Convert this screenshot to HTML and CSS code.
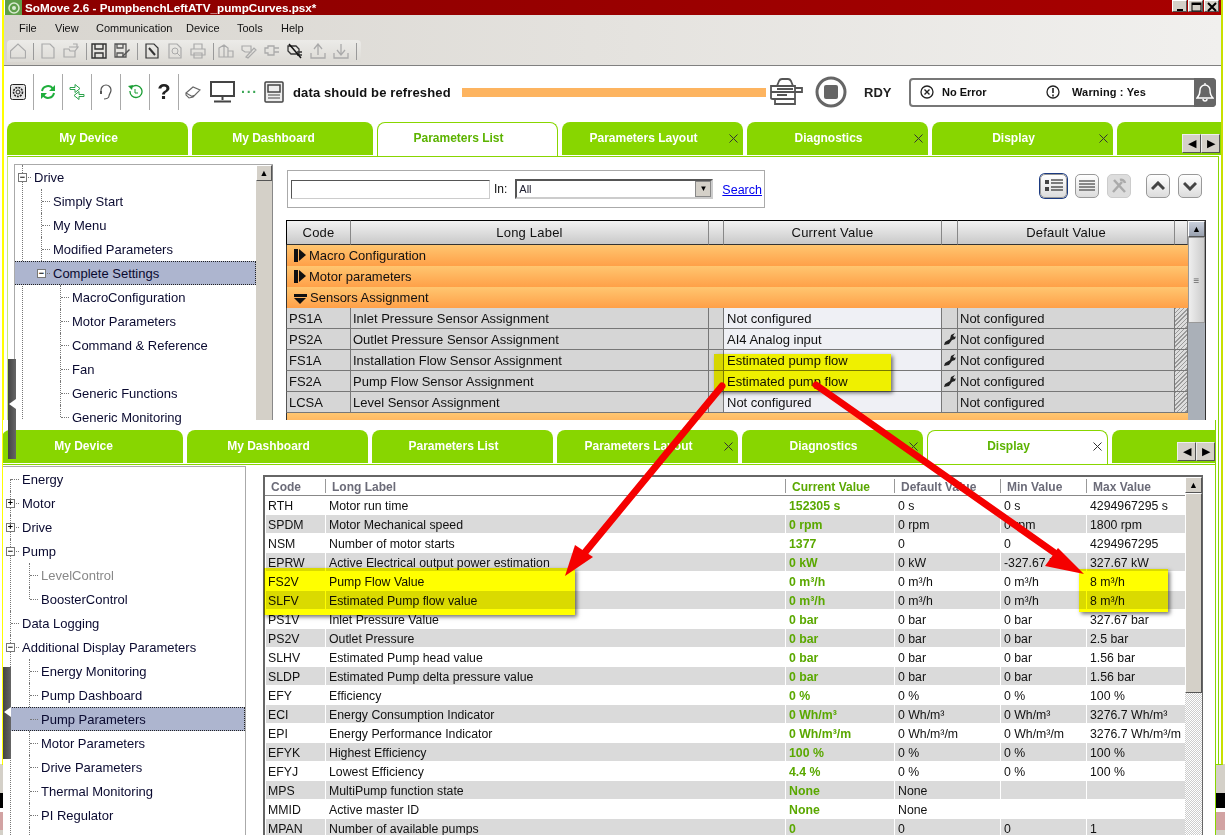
FILE: index.html
```html
<!DOCTYPE html>
<html lang="en">
<head>
    <meta charset="UTF-8">
    <title>SoMove 2.6 - PumpbenchLeftATV_pumpCurves.psx*</title>
    <link rel="stylesheet" href="styles.css">
</head>
<body>
<div class="desktop">

    <!-- back window: parameters list -->
    <div class="window back">
        <div class="titlebar">
            <svg class="app-icon" width="17" height="15" viewBox="0 0 17 15"><rect width="17" height="15" fill="#5f9e4a"/><circle cx="9" cy="8" r="5" fill="none" stroke="#d8ead0" stroke-width="1.5"/><circle cx="9" cy="8" r="2" fill="#d8ead0"/></svg>
            <span class="title-text">SoMove 2.6 - PumpbenchLeftATV_pumpCurves.psx*</span>
            <div class="win-buttons">
                <button class="win-btn"><svg width="15" height="12"><rect x="4" y="8" width="6" height="2" fill="#000"/></svg></button>
                <button class="win-btn"><svg width="15" height="12"><rect x="3" y="2" width="9" height="8" fill="none" stroke="#000"/><rect x="3" y="2" width="9" height="2" fill="#000"/></svg></button>
                <button class="win-btn"><svg width="15" height="12"><path d="M3 2l8 8M11 2l-8 8" stroke="#000" stroke-width="2"/></svg></button>
            </div>
        </div>
        <div class="menu-area">
            <nav class="menubar">
                <span>File</span><span>View</span><span>Communication</span><span>Device</span><span>Tools</span><span>Help</span>
            </nav>
            <div class="toolbar">
                <svg class="tool" viewBox="0 0 16 16"><path d="M0.5 8L8 1l7.5 7v7H0.5z" fill="none" stroke="#aaa" stroke-width="1.2"/></svg>
                <i class="sep"></i>
                <svg class="tool" viewBox="0 0 16 16"><path d="M2 1h8l4 4v10H2z" fill="none" stroke="#aaa" stroke-width="1.2"/></svg>
                <svg class="tool" viewBox="0 0 16 16"><path d="M1 14V6h5l1 2h5v6zM12 8l3-4H6M10 1h4v3" fill="none" stroke="#aaa" stroke-width="1.2"/></svg>
                <i class="sep tight"></i>
                <svg class="tool" viewBox="0 0 16 16"><path d="M1 1h14v14H1zM4 1v5h8V1M4 15v-5h8v5" fill="none" stroke="#333" stroke-width="1.4"/></svg>
                <svg class="tool" viewBox="0 0 16 16"><path d="M1 1h11v13H1zM3 1v4h6V1M3 14v-4h6v4" fill="none" stroke="#555" stroke-width="1.3"/><path d="M8 13l7-7 1 1-7 7z" fill="#555"/></svg>
                <i class="sep"></i>
                <svg class="tool" viewBox="0 0 16 16"><path d="M2 1h8l4 4v10H2z" fill="none" stroke="#333" stroke-width="1.2"/><path d="M5 5l6 7" stroke="#333" stroke-width="2"/></svg>
                <svg class="tool" viewBox="0 0 16 16"><path d="M2 1h8l4 4v10H2z" fill="none" stroke="#aaa" stroke-width="1.2"/><circle cx="8" cy="8" r="3" fill="none" stroke="#aaa"/><path d="M10 10l3 3" stroke="#aaa"/></svg>
                <svg class="tool" viewBox="0 0 16 16"><path d="M4 6V1h8v5M1 6h14v6H1zM4 10h8v5H4z" fill="none" stroke="#aaa" stroke-width="1.2"/></svg>
                <i class="sep tight"></i>
                <svg class="tool" viewBox="0 0 16 16"><path d="M1 5l5-3 4 3v9H1zM6 2v12M10 8h5v6h-5z" fill="none" stroke="#aaa" stroke-width="1.2"/></svg>
                <svg class="tool" viewBox="0 0 16 16"><path d="M1 3h9v6H4L1 7zM5 14l8-9 2 2-8 8z" fill="none" stroke="#aaa" stroke-width="1.2"/></svg>
                <svg class="tool" viewBox="0 0 16 16"><path d="M1 5h3V3h6v9H4v-2H1zM10 5h5M10 9h5" fill="none" stroke="#aaa" stroke-width="1.3"/></svg>
                <svg class="tool" viewBox="0 0 16 16"><path d="M1 3h8l3 3v5H4L1 8zM10 9h5M10 12h5" fill="none" stroke="#333" stroke-width="1.3"/><path d="M2 1l12 14" stroke="#111" stroke-width="1.5"/></svg>
                <svg class="tool" viewBox="0 0 16 16"><path d="M1 10v5h14v-5M8 12V2M4 6l4-5 4 5" fill="none" stroke="#aaa" stroke-width="1.3"/></svg>
                <svg class="tool" viewBox="0 0 16 16"><path d="M1 10v5h14v-5M8 1v10M4 7l4 5 4-5" fill="none" stroke="#aaa" stroke-width="1.3"/></svg>
                <i class="sep"></i>
            </div>
        </div>

        <div class="actionbar">
            <svg class="act act-first" viewBox="0 0 16 16"><rect x="0.5" y="0.5" width="15" height="15" rx="2" fill="#e6e6e6" stroke="#222"/><circle cx="8" cy="8" r="4.5" fill="none" stroke="#222" stroke-width="1.6" stroke-dasharray="2 1"/><circle cx="8" cy="8" r="2" fill="none" stroke="#222"/></svg>
            <i class="act-sep"></i>
            <svg class="act" viewBox="0 0 16 16"><path d="M2 7a6 6 0 0 1 11-2M14 9a6 6 0 0 1-11 2" fill="none" stroke="#1fae3c" stroke-width="2"/><path d="M15 1v6H9zM1 15V9h6z" fill="#1fae3c"/></svg>
            <i class="act-sep"></i>
            <svg class="act" viewBox="0 0 16 16"><path d="M1 3.500h5V0.500l5 4-5 4V5.500H1z" fill="#fff" stroke="#2aa24a"/><path d="M15 10.500h-5v-3l-5 4 5 4v-3h5z" fill="#fff" stroke="#2aa24a"/></svg>
            <i class="act-sep"></i>
            <svg class="act" viewBox="0 0 16 16"><path d="M3 9V6a5 5 0 0 1 10 0c0 3-2 4-2 6 0 2-3 3-5 3" fill="none" stroke="#555" stroke-width="1.2"/><rect x="2" y="7" width="2" height="3" fill="#555"/></svg>
            <i class="act-sep"></i>
            <svg class="act" viewBox="0 0 16 16"><path d="M5 3a6 6 0 1 1-2 4" fill="none" stroke="#1b9e35" stroke-width="1.3"/><path d="M1 2l5-1-1 5z" fill="#1b9e35"/><path d="M8 5v4h3" fill="none" stroke="#1b9e35"/></svg>
            <i class="act-sep"></i>
            <span class="act help">?</span>
            <i class="act-sep"></i>
            <svg class="act" viewBox="0 0 16 16"><path d="M1 9l7-6 7 3-7 7zM1 9v2l3 3 4-1v-2" fill="none" stroke="#666" stroke-width="1.1"/></svg>
            <svg class="monitor" width="25" height="22" viewBox="0 0 25 22"><path d="M1 1h23v14H1zM12.500 15v4M4 20.500h17" fill="none" stroke="#444" stroke-width="2"/></svg>
            <span class="dots">···</span>
            <svg class="device" width="20" height="22" viewBox="0 0 20 22"><rect x="1" y="1" width="18" height="20" rx="1" fill="#eee" stroke="#444" stroke-width="1.5"/><rect x="4" y="4" width="12" height="7" fill="none" stroke="#444" stroke-width="1.5"/><path d="M4 14h12M4 17h12" stroke="#444"/></svg>
            <span class="refresh-note">data should be refreshed</span>
            <div class="progress"></div>
            <svg class="motor" width="35" height="28" viewBox="0 0 35 28"><path d="M8 8l2-5q1-2 3-2h6q2 0 3 2l2 5M2 8h24v6H2zM26 10h7v4h-7M2 14v6q0 1 2 1h22v-7M8 11h16M8 17h10M6 21v5h20v-5" fill="none" stroke="#555" stroke-width="1.800"/></svg>
            <svg class="stop" width="32" height="32" viewBox="0 0 32 32"><circle cx="16" cy="16" r="14" fill="#fff" stroke="#666" stroke-width="3"/><rect x="9" y="9" width="14" height="14" rx="2" fill="#666"/></svg>
            <span class="rdy">RDY</span>
            <div class="status">
                <svg class="status-icon" width="14" height="14" viewBox="0 0 14 14"><circle cx="7" cy="7" r="6" fill="none" stroke="#222" stroke-width="1.3"/><path d="M4.500 4.500l5 5M9.500 4.500l-5 5" stroke="#222" stroke-width="1.4"/></svg>
                <span class="status-label no-error">No Error</span>
                <svg class="status-icon" width="14" height="14" viewBox="0 0 14 14"><circle cx="7" cy="7" r="6" fill="none" stroke="#222" stroke-width="1.3"/><path d="M7 3v5M7 9.500v2" stroke="#222" stroke-width="1.6"/></svg>
                <span class="status-label warning">Warning : Yes</span>
                <div class="bell"><svg width="18" height="20" viewBox="0 0 18 20"><path d="M1 16c2-2 3-4 3-8a5 5 0 0 1 10 0c0 4 1 6 3 8zM7 17a2 2 0 0 0 4 0M9 3V1" fill="none" stroke="#fff" stroke-width="1.4"/></svg></div>
            </div>
        </div>

        <div class="tabs">
            <div class="tab">My Device</div>
            <div class="tab">My Dashboard</div>
            <div class="tab active">Parameters List</div>
            <div class="tab">Parameters Layout<svg class="close" width="9" height="9" viewBox="0 0 9 9"><path d="M0.500 0.500l8 8M8.500 0.500l-8 8" stroke="#333"/></svg></div>
            <div class="tab">Diagnostics<svg class="close" width="9" height="9" viewBox="0 0 9 9"><path d="M0.500 0.500l8 8M8.500 0.500l-8 8" stroke="#333"/></svg></div>
            <div class="tab">Display<svg class="close" width="9" height="9" viewBox="0 0 9 9"><path d="M0.500 0.500l8 8M8.500 0.500l-8 8" stroke="#333"/></svg></div>
            <div class="tab"></div>
            <div class="tab-scroll"><button class="tab-arrow">◀</button><button class="tab-arrow">▶</button></div>
        </div>

        <div class="tab-body">
            <div class="handle"><i></i></div>
            <div class="tree-panel">
                <ul class="tree">
                    <li class="cont">
                        <div class="node"><b class="box">−</b>Drive</div>
                        <ul>
                            <li><div class="node">Simply Start</div></li>
                            <li><div class="node">My Menu</div></li>
                            <li><div class="node">Modified Parameters</div></li>
                            <li>
                                <div class="node selected sel-a"><b class="box">−</b>Complete Settings</div>
                                <ul>
                                    <li><div class="node">MacroConfiguration</div></li>
                                    <li><div class="node">Motor Parameters</div></li>
                                    <li><div class="node">Command &amp; Reference</div></li>
                                    <li><div class="node">Fan</div></li>
                                    <li><div class="node">Generic Functions</div></li>
                                    <li><div class="node">Generic Monitoring</div></li>
                                </ul>
                            </li>
                        </ul>
                    </li>
                </ul>
                <div class="tree-scroll"><button class="sb-btn">▲</button><div class="sb-thumb"></div></div>
            </div>

            <div class="params">
                <div class="search-row">
                    <div class="search-box">
                        <input class="search-input" type="text">
                        <span>In:</span>
                        <div class="select"><span>All</span><b>▼</b></div>
                        <a class="search-link">Search</a>
                    </div>
                    <div class="view-buttons">
                        <button class="view-btn on"><svg width="18" height="14" viewBox="0 0 18 14"><path d="M0 1h4v4H0zM0 8h4v4H0z" fill="#444"/><path d="M6 1h12M6 4h12M6 8h12M6 11h12" stroke="#555" stroke-width="1.300"/></svg></button>
                        <button class="view-btn"><svg width="16" height="12" viewBox="0 0 16 12"><path d="M0 1h16M0 4h16M0 7h16M0 10h16" stroke="#666" stroke-width="1.300"/></svg></button>
                        <button class="view-btn off"><svg width="18" height="18" viewBox="0 0 18 18"><path d="M3 15L12 5M4 3l11 12M10 3a4 4 0 0 1 5 3" fill="none" stroke="#aaa" stroke-width="2.500"/></svg></button>
                        <button class="view-btn gap"><svg width="14" height="10" viewBox="0 0 14 10"><path d="M1 8l6-6 6 6" fill="none" stroke="#444" stroke-width="3"/></svg></button>
                        <button class="view-btn"><svg width="14" height="10" viewBox="0 0 14 10"><path d="M1 2l6 6 6-6" fill="none" stroke="#444" stroke-width="3"/></svg></button>
                    </div>
                </div>
                <div class="table-wrap">
                    <table class="list">
                        <colgroup>
                            <col class="c-code"><col class="c-label"><col class="c-gap1"><col class="c-cur"><col class="c-gap2"><col class="c-def"><col class="c-hatch">
                        </colgroup>
                        <thead>
                            <tr><th>Code</th><th>Long Label</th><th></th><th>Current Value</th><th></th><th>Default Value</th><th></th></tr>
                        </thead>
                        <tbody>
                            <tr class="group"><td colspan="7"><i class="tri-right"></i>Macro Configuration</td></tr>
                            <tr class="group"><td colspan="7"><i class="tri-right"></i>Motor parameters</td></tr>
                            <tr class="group"><td colspan="7"><i class="tri-down"></i>Sensors Assignment</td></tr>
                            <tr><td>PS1A</td><td>Inlet Pressure Sensor Assignment</td><td></td><td class="cur">Not configured</td><td></td><td>Not configured</td><td class="hatch"></td></tr>
                            <tr><td>PS2A</td><td>Outlet Pressure Sensor Assignment</td><td></td><td class="cur">AI4 Analog input</td><td class="wrench"><svg width="14" height="14" viewBox="0 0 14 14"><path d="M1 13l1-3 5-3 1-4 4-2-2 3 2 1 1-1-1 3-3 1-3 4z" fill="#222"/></svg></td><td>Not configured</td><td class="hatch"></td></tr>
                            <tr><td>FS1A</td><td>Installation Flow Sensor Assignment</td><td></td><td class="cur">Estimated pump flow</td><td class="wrench"><svg width="14" height="14" viewBox="0 0 14 14"><path d="M1 13l1-3 5-3 1-4 4-2-2 3 2 1 1-1-1 3-3 1-3 4z" fill="#222"/></svg></td><td>Not configured</td><td class="hatch"></td></tr>
                            <tr><td>FS2A</td><td>Pump Flow Sensor Assignment</td><td></td><td class="cur">Estimated pump flow</td><td class="wrench"><svg width="14" height="14" viewBox="0 0 14 14"><path d="M1 13l1-3 5-3 1-4 4-2-2 3 2 1 1-1-1 3-3 1-3 4z" fill="#222"/></svg></td><td>Not configured</td><td class="hatch"></td></tr>
                            <tr><td>LCSA</td><td>Level Sensor Assignment</td><td></td><td class="cur">Not configured</td><td></td><td>Not configured</td><td class="hatch"></td></tr>
                            <tr class="group"><td colspan="7"></td></tr>
                        </tbody>
                    </table>
                    <div class="list-scroll"><button class="sb-btn">▲</button><div class="list-thumb"><span>≡</span></div></div>
                </div>
            </div>
        </div>
    </div>

    <!-- front window: display -->
    <div class="window front">
        <div class="tabs">
            <div class="tab">My Device</div>
            <div class="tab">My Dashboard</div>
            <div class="tab">Parameters List</div>
            <div class="tab">Parameters Layout<svg class="close" width="9" height="9" viewBox="0 0 9 9"><path d="M0.500 0.500l8 8M8.500 0.500l-8 8" stroke="#333"/></svg></div>
            <div class="tab">Diagnostics<svg class="close" width="9" height="9" viewBox="0 0 9 9"><path d="M0.500 0.500l8 8M8.500 0.500l-8 8" stroke="#333"/></svg></div>
            <div class="tab active">Display<svg class="close" width="9" height="9" viewBox="0 0 9 9"><path d="M0.500 0.500l8 8M8.500 0.500l-8 8" stroke="#333"/></svg></div>
            <div class="tab"></div>
            <div class="tab-scroll"><button class="tab-arrow">◀</button><button class="tab-arrow">▶</button></div>
        </div>
        <div class="tab-body">
            <div class="handle"><i></i></div>
            <div class="tree-panel">
                <ul class="tree">
                    <li class="first"><div class="node">Energy</div></li>
                    <li><div class="node"><b class="box">+</b>Motor</div></li>
                    <li><div class="node"><b class="box">+</b>Drive</div></li>
                    <li>
                        <div class="node"><b class="box">−</b>Pump</div>
                        <ul>
                            <li><div class="node muted">LevelControl</div></li>
                            <li><div class="node">BoosterControl</div></li>
                        </ul>
                    </li>
                    <li><div class="node">Data Logging</div></li>
                    <li class="cont">
                        <div class="node"><b class="box">−</b>Additional Display Parameters</div>
                        <ul>
                            <li><div class="node">Energy Monitoring</div></li>
                            <li><div class="node">Pump Dashboard</div></li>
                            <li><div class="node selected sel-b">Pump Parameters</div></li>
                            <li><div class="node">Motor Parameters</div></li>
                            <li><div class="node">Drive Parameters</div></li>
                            <li><div class="node">Thermal Monitoring</div></li>
                            <li><div class="node">PI Regulator</div></li>
                            <li><div class="node">Flow Thresholds</div></li>
                        </ul>
                    </li>
                </ul>
            </div>

            <div class="display-wrap">
                <table class="display">
                    <colgroup>
                        <col class="d-code"><col class="d-label"><col class="d-cur"><col class="d-def"><col class="d-min"><col class="d-max">
                    </colgroup>
                    <thead>
                        <tr><th>Code</th><th>Long Label</th><th class="green">Current Value</th><th>Default Value</th><th>Min Value</th><th>Max Value</th></tr>
                    </thead>
                    <tbody>
                        <tr><td>RTH</td><td>Motor run time</td><td class="val">152305 s</td><td>0 s</td><td>0 s</td><td>4294967295 s</td></tr>
                        <tr><td>SPDM</td><td>Motor Mechanical speed</td><td class="val">0 rpm</td><td>0 rpm</td><td>0 rpm</td><td>1800 rpm</td></tr>
                        <tr><td>NSM</td><td>Number of motor starts</td><td class="val">1377</td><td>0</td><td>0</td><td>4294967295</td></tr>
                        <tr><td>EPRW</td><td>Active Electrical output power estimation</td><td class="val">0 kW</td><td>0 kW</td><td>-327.67 kW</td><td>327.67 kW</td></tr>
                        <tr><td>FS2V</td><td>Pump Flow Value</td><td class="val">0 m³/h</td><td>0 m³/h</td><td>0 m³/h</td><td>8 m³/h</td></tr>
                        <tr><td>SLFV</td><td>Estimated Pump flow value</td><td class="val">0 m³/h</td><td>0 m³/h</td><td>0 m³/h</td><td>8 m³/h</td></tr>
                        <tr><td>PS1V</td><td>Inlet Pressure Value</td><td class="val">0 bar</td><td>0 bar</td><td>0 bar</td><td>327.67 bar</td></tr>
                        <tr><td>PS2V</td><td>Outlet Pressure</td><td class="val">0 bar</td><td>0 bar</td><td>0 bar</td><td>2.5 bar</td></tr>
                        <tr><td>SLHV</td><td>Estimated Pump head value</td><td class="val">0 bar</td><td>0 bar</td><td>0 bar</td><td>1.56 bar</td></tr>
                        <tr><td>SLDP</td><td>Estimated Pump delta pressure value</td><td class="val">0 bar</td><td>0 bar</td><td>0 bar</td><td>1.56 bar</td></tr>
                        <tr><td>EFY</td><td>Efficiency</td><td class="val">0 %</td><td>0 %</td><td>0 %</td><td>100 %</td></tr>
                        <tr><td>ECI</td><td>Energy Consumption Indicator</td><td class="val">0 Wh/m³</td><td>0 Wh/m³</td><td>0 Wh/m³</td><td>3276.7 Wh/m³</td></tr>
                        <tr><td>EPI</td><td>Energy Performance Indicator</td><td class="val">0 Wh/m³/m</td><td>0 Wh/m³/m</td><td>0 Wh/m³/m</td><td>3276.7 Wh/m³/m</td></tr>
                        <tr><td>EFYK</td><td>Highest Efficiency</td><td class="val">100 %</td><td>0 %</td><td>0 %</td><td>100 %</td></tr>
                        <tr><td>EFYJ</td><td>Lowest Efficiency</td><td class="val">4.4 %</td><td>0 %</td><td>0 %</td><td>100 %</td></tr>
                        <tr><td>MPS</td><td>MultiPump function state</td><td class="val">None</td><td>None</td><td></td><td></td></tr>
                        <tr><td>MMID</td><td>Active master ID</td><td class="val">None</td><td>None</td><td></td><td></td></tr>
                        <tr><td>MPAN</td><td>Number of available pumps</td><td class="val">0</td><td>0</td><td>0</td><td>1</td></tr>
                    </tbody>
                </table>
                <div class="display-scroll"><button class="sb-btn">▲</button><div class="display-thumb"></div></div>
            </div>
        </div>
    </div>

    <!-- annotations drawn on top of the screenshot -->
    <div class="mark mark-current"></div>
    <div class="mark mark-codes"></div>
    <div class="mark mark-max"></div>
    <svg class="arrows" width="1225" height="835" viewBox="0 0 1225 835">
        <path d="M722 386L582 556" stroke="#f50000" stroke-width="7" stroke-linecap="round"/>
        <path d="M565 576L575 545L593 557z" fill="#f50000"/>
        <path d="M816 385L1062 558" stroke="#f50000" stroke-width="7" stroke-linecap="round"/>
        <path d="M1084 574L1058 548L1045 566z" fill="#f50000"/>
    </svg>
</div>
</body>
</html>
```

FILE: styles.css
```css
* {
    box-sizing: border-box;
}

body {
    margin: 0;
    font-family: 'Liberation Sans', Arial, sans-serif;
    color: #111;
}

button {
    font-family: inherit;
    padding: 0;
}

ul {
    list-style: none;
    margin: 0;
    padding: 0;
}

.desktop {
    position: relative;
    width: 1225px;
    height: 835px;
    overflow: hidden;
    background: linear-gradient(#fff 0, #fff 764px, #d4d0c8 764px, #d4d0c8 793px, #000 793px, #000 808px, #fff 808px, #fff 812px, #d2a3a3 812px, #d2a3a3 830px, #d4d0c8 830px);
}

.window {
    position: absolute;
    background: #fff;
    overflow: hidden;
}

.back {
    left: 2px;
    top: 0;
    width: 1221px;
    height: 765px;
    border-left: 2px solid #ff0;
    border-right: 2px solid #c8e000;
    border-bottom: 1px solid #88d600;
    display: flex;
    flex-direction: column;
}

.front {
    left: 3px;
    top: 420px;
    width: 1213px;
    height: 415px;
    padding-top: 10px;
    border-right: 1px solid #88d600;
    display: flex;
    flex-direction: column;
}

/* title + menu */
.titlebar {
    height: 15px;
    flex: none;
    display: flex;
    align-items: center;
    margin-left: 1px;
    background: linear-gradient(90deg, #8a0000, #a80000);
    color: #fff;
    font-size: 11.7px;
    font-weight: bold;
}

.app-icon {
    flex: none;
}

.title-text {
    margin-left: 3px;
}

.win-buttons {
    margin-left: auto;
    margin-right: 2px;
    display: flex;
    gap: 1px;
}

.win-btn {
    width: 15px;
    height: 12px;
    margin-top: -3px;
    border: 1px solid;
    border-color: #fff #555 #555 #fff;
    background: #d4d0c8;
    display: flex;
}

.menu-area {
    height: 51px;
    flex: none;
    background: linear-gradient(90deg, #d8d5cf, #f1f0ee);
    border-bottom: 1px solid #808080;
}

.menubar {
    height: 25px;
    display: flex;
    align-items: center;
    padding-left: 15px;
    font-size: 11px;
    gap: 0;
}

.menubar span:nth-child(1) { width: 36px; }
.menubar span:nth-child(2) { width: 41px; }
.menubar span:nth-child(3) { width: 90px; }
.menubar span:nth-child(4) { width: 51px; }
.menubar span:nth-child(5) { width: 44px; }

.toolbar {
    height: 22px;
    width: 354px;
    margin-left: 3px;
    padding-left: 3px;
    border-radius: 4px 4px 0 0;
    background: linear-gradient(#ecebe8, #dddbd6);
    display: flex;
    align-items: center;
    gap: 7px;
}

.tool {
    width: 16px;
    height: 16px;
    flex: none;
}

.sep {
    width: 1px;
    height: 17px;
    flex: none;
    background: #999;
    margin-right: -1px;
}

.sep.tight {
    margin-right: -3px;
}

/* action row */
.actionbar {
    height: 56px;
    flex: none;
    display: flex;
    align-items: center;
    padding: 0 6px 4px 6px;
    gap: 6px;
}

.act {
    width: 16px;
    height: 16px;
    flex: none;
}

.act-first {
    margin-right: 1px;
}

.act-sep {
    width: 1px;
    height: 36px;
    flex: none;
    background: #aaa;
}

.help {
    width: 16px;
    height: auto;
    font-size: 22px;
    font-weight: bold;
    color: #222;
    line-height: 24px;
    text-align: center;
}

.monitor {
    margin-left: 3px;
    flex: none;
}

.dots {
    width: 14px;
    font-size: 14px;
    font-weight: bold;
    color: #3aa655;
    letter-spacing: 1px;
}

.device {
    margin-left: 3px;
    flex: none;
}

.refresh-note {
    margin-left: 3px;
    font-size: 13px;
    font-weight: bold;
    letter-spacing: 0.13px;
    white-space: nowrap;
}

.progress {
    margin-left: auto;
    width: 304px;
    height: 9px;
    flex: none;
    background: #fdb460;
}

.motor {
    flex: none;
    margin-left: -3px;
}

.stop {
    flex: none;
    margin-left: 5px;
}

.rdy {
    margin-left: 11px;
    width: 39px;
    font-size: 13px;
    font-weight: bold;
    color: #222;
}

.status {
    width: 307px;
    height: 29px;
    flex: none;
    margin-right: -1px;
    border: 2px solid #777;
    border-radius: 4px;
    display: flex;
    align-items: center;
    padding-left: 9px;
    font-size: 11px;
    font-weight: bold;
    position: relative;
}

.status-label {
    margin-left: 8px;
}

.no-error {
    width: 104px;
}

.status-label.warning {
    margin-left: 12px;
    letter-spacing: 0.15px;
}

.bell {
    position: absolute;
    right: -2px;
    top: -2px;
    bottom: -2px;
    width: 22px;
    background: #666;
    border-radius: 0 4px 4px 0;
    display: flex;
    align-items: center;
    justify-content: center;
}

/* tabs */
.tabs {
    height: 34px;
    flex: none;
    position: relative;
    display: flex;
    gap: 4px;
    overflow: hidden;
    margin-left: 3px;
}

.front .tabs {
    margin-left: -1px;
}

.tab {
    width: 181px;
    flex: none;
    position: relative;
    border-radius: 8px 8px 0 0;
    background: #88d600;
    color: #fff;
    font-size: 12px;
    font-weight: bold;
    text-align: center;
    line-height: 32px;
    padding-right: 18px;
    box-shadow: 0 -1px 0 #fff inset;
}

.tab.active {
    background: #fff;
    color: #5cb300;
    border: 1px solid #88d600;
    border-bottom: none;
    line-height: 30px;
    box-shadow: none;
}

.close {
    position: absolute;
    right: 5px;
    top: 12px;
}

.tab.active .close {
    right: 5px;
    top: 11px;
}

.tab-scroll {
    position: absolute;
    top: 12px;
    right: 0;
    display: flex;
}

.back .tab-scroll {
    right: 1px;
}

.tab-arrow {
    width: 19px;
    height: 19px;
    border: 1px solid;
    border-color: #eee #555 #555 #eee;
    background: #d4d0c8;
    color: #000;
    font-size: 11px;
    line-height: 1;
}

.tab-body {
    flex: 1;
    position: relative;
    display: flex;
    min-height: 0;
    border-top: 1px solid #88d600;
}

.back .tab-body {
    margin-left: 3px;
    margin-right: 2px;
    padding: 7px 0 0 6px;
    border-left: 1px solid #c5e87a;
    border-right: 1px solid #88d600;
}

.front .tab-body {
    padding-top: 1px;
}

.handle {
    position: absolute;
    left: 0;
    width: 8px;
    background: linear-gradient(90deg, #444, #666);
    z-index: 2;
}

.back .handle {
    top: 202px;
    height: 100px;
}

.front .handle {
    top: 202px;
    height: 92px;
}

.handle i {
    position: absolute;
    left: 1px;
    top: 40px;
    border: 5px solid transparent;
    border-right: 7px solid #fff;
    border-left: none;
}

/* tree */
.tree-panel {
    flex: none;
    display: flex;
    overflow: hidden;
    border: 1px solid #aaa;
    font-size: 13px;
}

.back .tree-panel {
    width: 259px;
    height: 300px;
    border-width: 1px 0 1px 1px;
}

.front .tree-panel {
    width: 243px;
    border-width: 1px 1px 0 0;
}

.tree {
    flex: 1;
    min-width: 0;
    padding-left: 7px;
}

.tree li {
    position: relative;
}

.tree li::before {
    content: "";
    position: absolute;
    left: 0;
    top: 0;
    bottom: 0;
    border-left: 1px dotted #777;
}

.tree li:last-child::before {
    bottom: auto;
    height: 12px;
}

.tree li.cont::before,
.tree li.first::before {
    height: auto;
    bottom: 0;
}

.tree li.first::before {
    top: 12px;
}

.tree ul {
    margin-left: 19px;
}

.node {
    position: relative;
    height: 24px;
    line-height: 26px;
    padding-left: 12px;
    white-space: nowrap;
    color: #0a0a30;
    z-index: 1;
}

.node::before {
    content: "";
    position: absolute;
    left: 1px;
    top: 12px;
    width: 8px;
    border-top: 1px dotted #777;
}

.node.muted {
    color: #888;
}

.box {
    position: absolute;
    left: -4px;
    top: 8px;
    width: 9px;
    height: 9px;
    border: 1px solid #777;
    background: #fff;
    font-size: 9px;
    font-weight: bold;
    line-height: 7px;
    text-align: center;
    color: #000;
    z-index: 1;
}

.node.selected {
    background: #adb5cf;
    outline: 1px dotted #222;
    outline-offset: -1px;
}

.sel-a {
    margin-left: -27px;
    padding-left: 39px;
}

.sel-a .box {
    left: 23px;
}

.sel-a::before {
    left: 28px;
}

.sel-b {
    margin-left: -20px;
    padding-left: 32px;
}

.sel-b::before {
    left: 21px;
}

.tree-scroll {
    width: 17px;
    flex: none;
    background: #d4d0c8;
    border-right: 1px solid #888;
}

.sb-btn {
    display: block;
    width: 100%;
    height: 16px;
    border: 1px solid;
    border-color: #fff #555 #555 #fff;
    background: #d4d0c8;
    font-size: 9px;
    line-height: 1;
    color: #000;
}

/* search + table, back window */
.params {
    width: 920px;
    flex: none;
    margin-left: 13px;
}

.search-row {
    display: flex;
    margin-top: 6px;
    align-items: flex-start;
    padding-right: 4px;
}

.search-box {
    width: 478px;
    height: 38px;
    margin-left: 1px;
    border: 1px solid #aaa;
    display: flex;
    align-items: center;
    padding-left: 3px;
    font-size: 12px;
    position: relative;
}

.search-input {
    width: 199px;
    height: 19px;
    border: 1px solid;
    border-color: #555 #ccc #ccc #555;
    background: #fff;
    margin: 0 4px 0 0;
    padding: 0;
}

.select {
    width: 198px;
    height: 20px;
    margin-left: 8px;
    border: 2px solid;
    border-color: #555 #ccc #ccc #555;
    display: flex;
    align-items: center;
    justify-content: space-between;
    font-size: 11px;
    padding-left: 2px;
    color: #223;
}

.select b {
    width: 16px;
    height: 16px;
    background: #d4d0c8;
    border: 1px solid #888;
    font-size: 8px;
    font-weight: normal;
    line-height: 14px;
    text-align: center;
    color: #000;
}

.search-link {
    margin: 2px 0 0 9px;
    font-size: 12.5px;
    color: #00e;
    text-decoration: underline;
}

.view-buttons {
    margin-left: auto;
    margin-top: 4px;
    display: flex;
    gap: 8px;
}

.view-btn {
    width: 24px;
    height: 24px;
    border: 1px solid #999;
    border-radius: 5px;
    background: linear-gradient(#fff, #dcdcdc);
    display: flex;
    align-items: center;
    justify-content: center;
}

.view-btn.on {
    width: 27px;
    box-shadow: 0 0 0 1px #1b3a80;
}

.view-btn.off {
    background: #ddd;
    border-color: #ccc;
}

.view-btn.gap {
    margin-left: 7px;
}

.table-wrap {
    display: flex;
    margin-top: 12px;
}

.list {
    width: 902px;
    flex: none;
    table-layout: fixed;
    border-collapse: separate;
    border-spacing: 0;
    font-size: 13px;
}

.c-code { width: 65px; }
.c-label { width: 358px; }
.c-gap1 { width: 15px; }
.c-cur { width: 218px; }
.c-gap2 { width: 16px; }
.c-def { width: 217px; }
.c-hatch { width: 13px; }

.list th {
    height: 25px;
    padding: 0;
    font-weight: normal;
    letter-spacing: 0.2px;
    background: linear-gradient(#f2f2f2, #c9c9c9);
    border-top: 1px solid #000;
    border-bottom: 1px solid #333;
    border-right: 1px solid #888;
}

.list th:first-child {
    border-left: 1px solid #000;
}

.list td {
    height: 21px;
    padding: 0 0 0 2px;
    background: #d6d6d6;
    border-right: 1px solid #777;
    border-bottom: 1px solid #777;
    white-space: nowrap;
    overflow: hidden;
}

.list td:first-child {
    border-left: 1px solid #555;
}

.list td.cur {
    padding-left: 3px;
    background: #eff0f5;
}

.list td.wrench {
    padding: 0;
    line-height: 0;
    text-align: center;
}

.list td.hatch {
    padding: 0;
    background: repeating-linear-gradient(135deg, #999 0, #999 1px, #ddd 1px, #ddd 3px);
}

.list .group td {
    padding: 0 0 1px 7px;
    background: linear-gradient(#ffc670, #ffa048);
    border: none;
    border-left: 1px solid #333;
}

.tri-right {
    display: inline-block;
    width: 4px;
    height: 13px;
    margin-right: 11px;
    vertical-align: -2px;
    background: #111;
    position: relative;
}

.tri-right::after {
    content: "";
    position: absolute;
    left: 5px;
    top: 0;
    border: 6.5px solid transparent;
    border-left: 7px solid #111;
    border-right: none;
}

.tri-down {
    display: inline-block;
    width: 13px;
    height: 3px;
    margin-right: 3px;
    vertical-align: 5px;
    background: #111;
    position: relative;
}

.tri-down::after {
    content: "";
    position: absolute;
    left: 0;
    top: 4px;
    border: 6.5px solid transparent;
    border-top: 6px solid #111;
    border-bottom: none;
}

.list-scroll {
    width: 18px;
    flex: none;
    background: #aab0b8;
    border-top: 1px solid #333;
    border-right: 1px solid #333;
    margin-left: 0;
}

.list-scroll .sb-btn {
    background: linear-gradient(#c9d0dc, #98a0ae);
}

.list-thumb {
    height: 86px;
    background: linear-gradient(90deg, #eee, #ccc);
    border: 1px solid #999;
    display: flex;
    align-items: center;
    justify-content: center;
    font-size: 10px;
    color: #666;
}

/* display table, front window */
.display-wrap {
    margin: 9px 0 0 17px;
    display: flex;
    border-top: 2px solid #666;
    border-left: 2px solid #666;
    align-self: flex-start;
}

.display {
    width: 920px;
    flex: none;
    table-layout: fixed;
    border-collapse: separate;
    border-spacing: 0;
    font-size: 12.3px;
}

.d-code { width: 60px; }
.d-label { width: 460px; }
.d-cur { width: 109px; }
.d-def { width: 106px; }
.d-min { width: 86px; }
.d-max { width: 99px; }

.display th {
    height: 19px;
    padding: 2px 0 0 6px;
    text-align: left;
    font-size: 12px;
    color: #6b6b78;
    background: #fff;
    border-bottom: 1px solid #888;
    position: relative;
}

.display th + th {
    padding-left: 7px;
}

.display th + th::before {
    content: "";
    position: absolute;
    left: 0;
    top: 2px;
    bottom: 2px;
    border-left: 1px solid #999;
}

.display th.green {
    color: #5aa800;
}

.display td {
    height: 19px;
    padding: 2px 0 0 3px;
    border-bottom: 1px solid #fff;
    border-left: 1px solid #fff;
    white-space: nowrap;
}

.display td:first-child {
    padding-left: 2px;
}

.display tbody tr:nth-child(even) td {
    background: #dadada;
}

.display td.val {
    color: #5aa800;
    font-weight: bold;
}

.display-scroll {
    width: 18px;
    flex: none;
    border-right: 1px solid #666;
    background: repeating-conic-gradient(#ccc 0 25%, #fff 0 50%) 0 0 / 2px 2px;
}

.display-thumb {
    height: 200px;
    background: #d4d0c8;
    border: 1px solid;
    border-color: #fff #555 #555 #fff;
}

/* yellow marker boxes and arrows */
.mark {
    position: absolute;
    background: #ff0;
    mix-blend-mode: multiply;
    box-shadow: 2px 2px 4px rgba(0, 0, 0, 0.55);
}

.mark-current {
    left: 714px;
    top: 354px;
    width: 177px;
    height: 37px;
}

.mark-codes {
    left: 264px;
    top: 568px;
    width: 311px;
    height: 47px;
}

.mark-max {
    left: 1079px;
    top: 569px;
    width: 89px;
    height: 43px;
}

.arrows {
    position: absolute;
    left: 0;
    top: 0;
    pointer-events: none;
}
```
